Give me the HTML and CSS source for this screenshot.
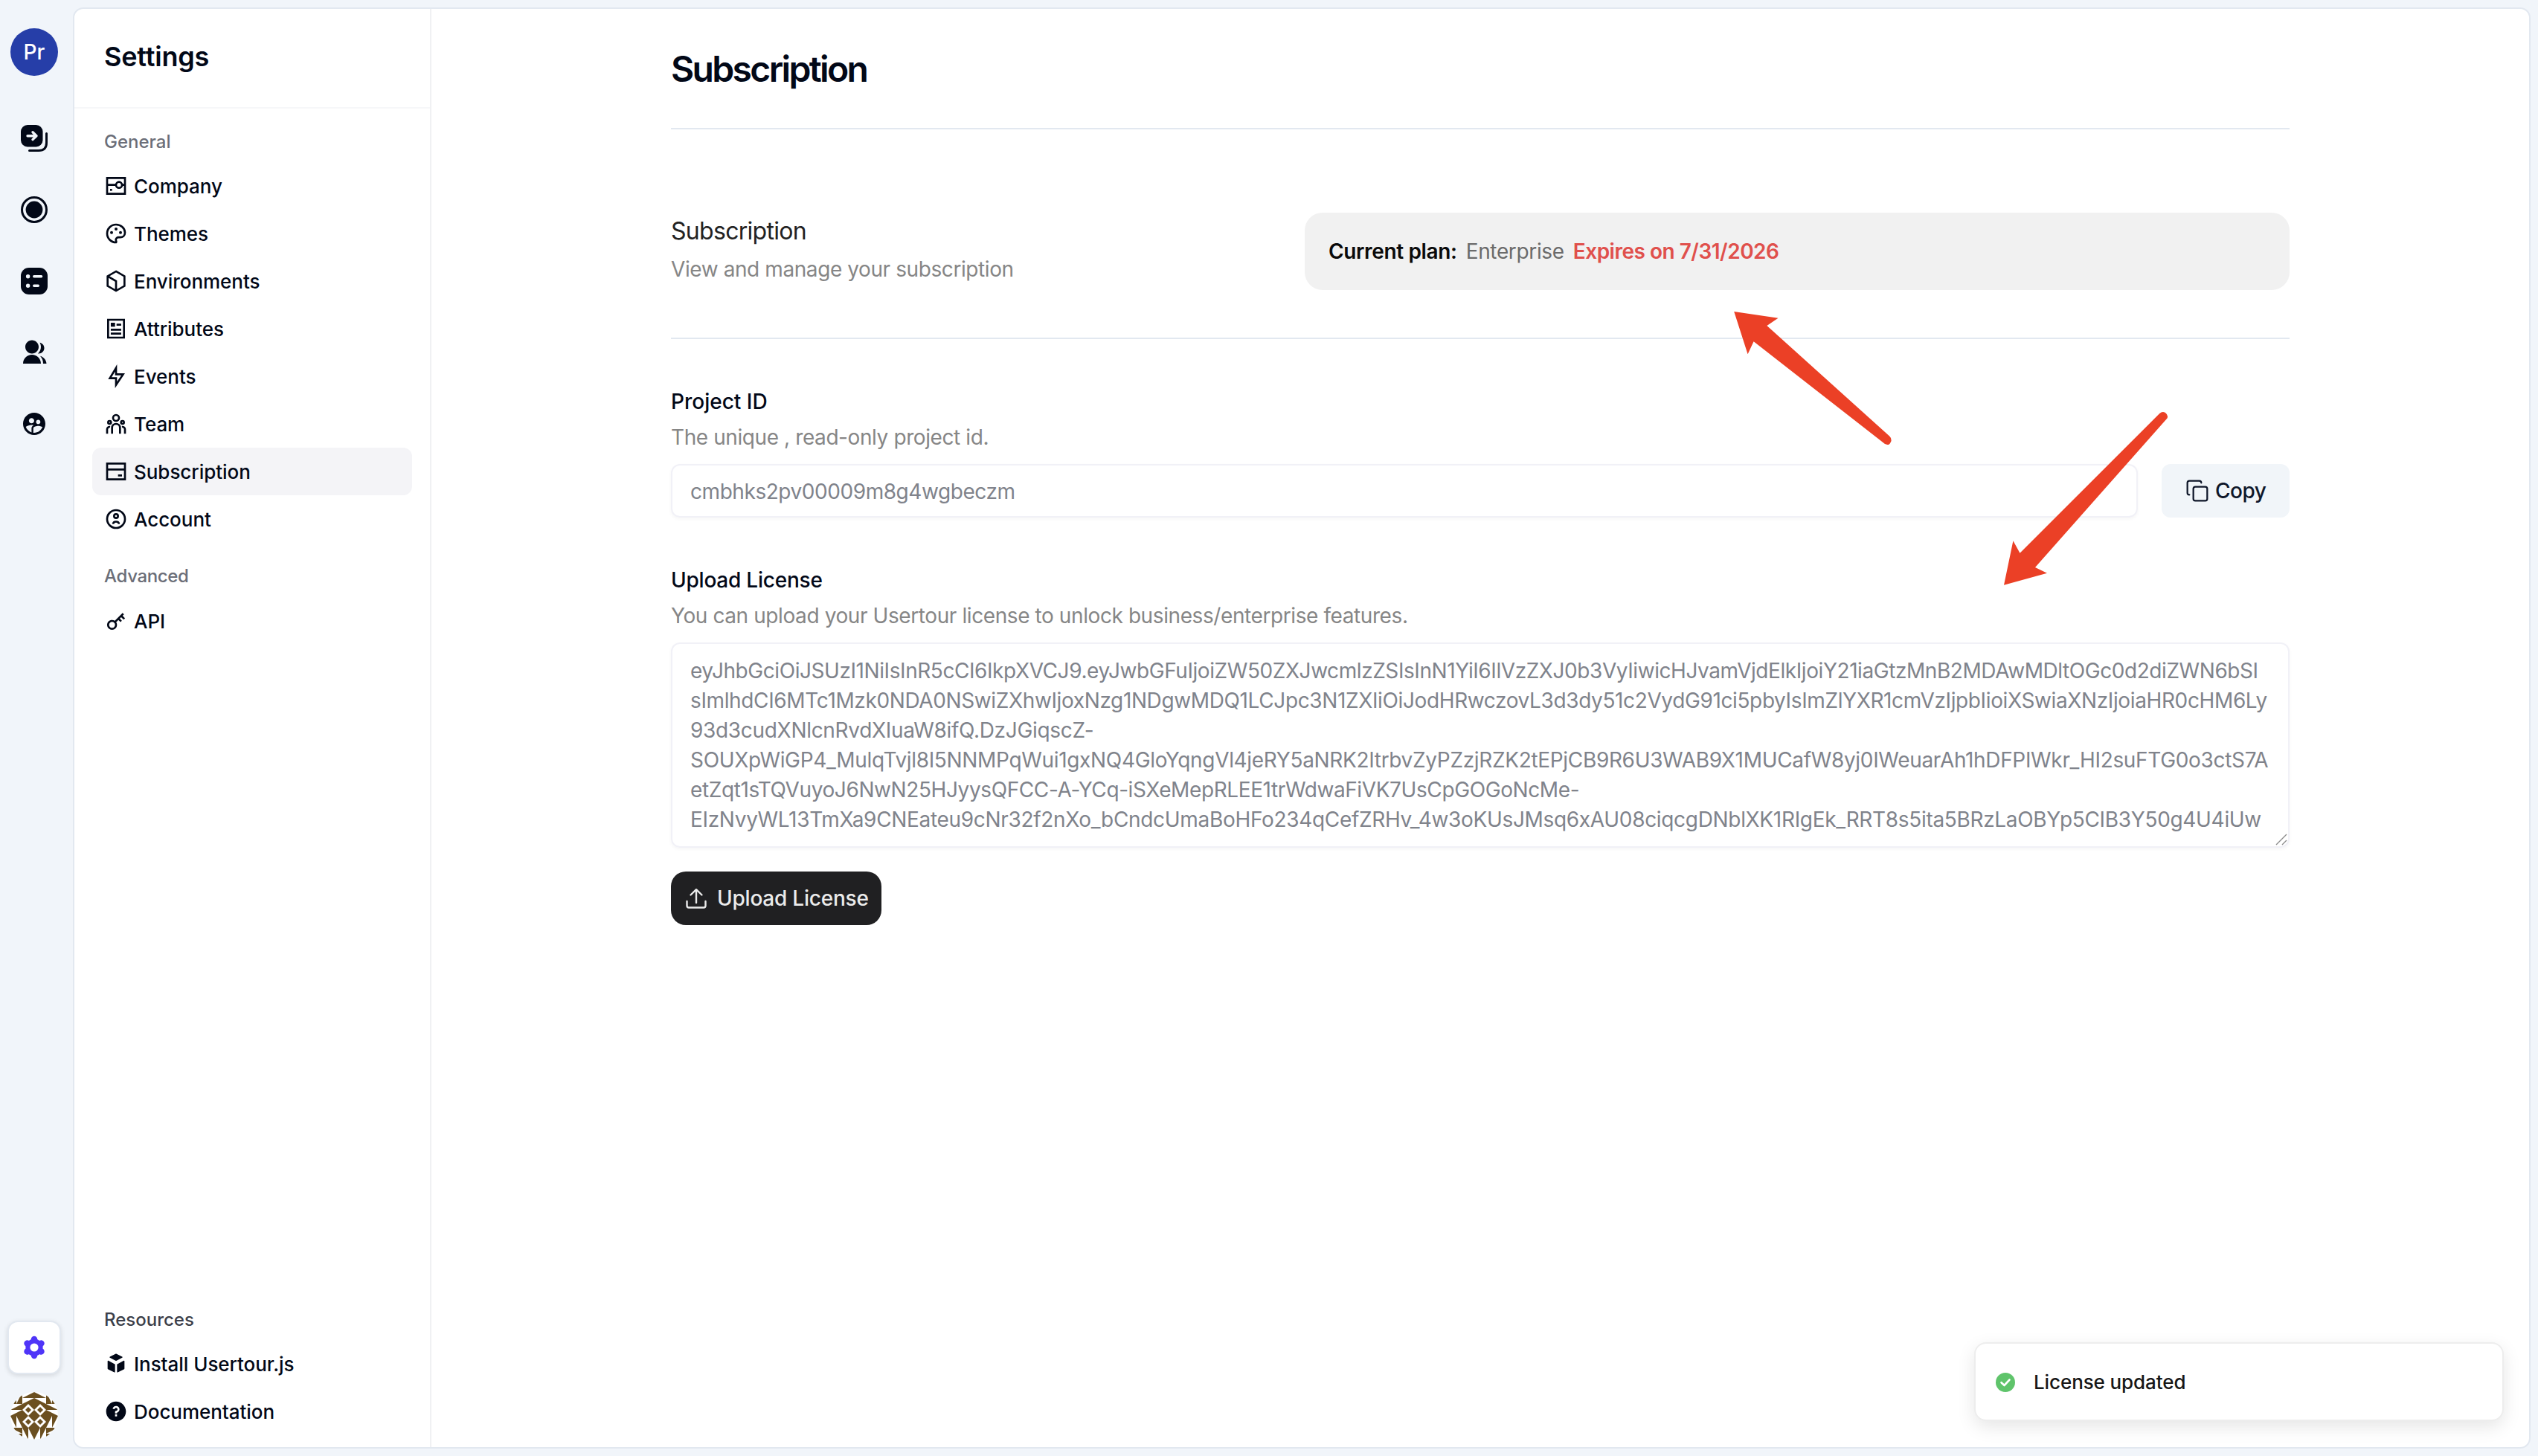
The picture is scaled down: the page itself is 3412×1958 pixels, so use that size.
FILE: index.html
```html
<!DOCTYPE html>
<html lang="en">
<head>
<meta charset="utf-8">
<title>Settings – Subscription</title>
<link rel="stylesheet" href="styles.css">
</head>
<body>
<div class="app">
  <nav class="rail">
    <div class="project-badge">Pr</div>
    <div class="rail-links">
      <a class="rail-link"><svg viewBox="0 0 36 36"><rect width="29.5" height="29.5" rx="9"/><path class="line" d="M34.5 11.5V24Q34.5 34.5 24 34.5H11.5"/><path class="cut" d="M9 14.7H20.5M16 9.8L21 14.7L16 19.6"/></svg></a>
      <a class="rail-link"><svg viewBox="0 0 36 36"><circle class="line" cx="18" cy="18" r="16.5"/><circle cx="18" cy="18" r="11.4"/></svg></a>
      <a class="rail-link"><svg viewBox="0 0 36 36"><rect width="36" height="36" rx="11"/><path class="cut" d="M17.7 11.7H27.6M17.7 24.3H23.3"/><circle class="hole" cx="9.6" cy="11.7" r="2.7"/><circle class="hole" cx="9.6" cy="24.3" r="2.7"/></svg></a>
      <a class="rail-link"><svg viewBox="0 0 24 24"><path d="M2 22C2 17.58 5.58 14 10 14C14.42 14 18 17.58 18 22H2ZM10 13C6.685 13 4 10.315 4 7C4 3.685 6.685 1 10 1C13.315 1 16 3.685 16 7C16 10.315 13.315 13 10 13ZM17.363 15.233C20.448 16.022 22.768 18.724 22.984 22H20C20 19.39 19 17.014 17.363 15.233ZM15.34 12.957C16.973 11.492 18 9.366 18 7C18 5.583 17.632 4.253 16.986 3.098C19.275 3.555 21 5.576 21 8C21 10.763 18.763 13 16 13C15.776 13 15.556 12.985 15.34 12.957Z"/></svg></a>
      <a class="rail-link"><svg viewBox="0 0 24 24"><path d="M11.99 2c-5.52 0-10 4.48-10 10s4.48 10 10 10 10-4.48 10-10-4.48-10-10-10zm3.61 6.34c1.07 0 1.93.86 1.93 1.93s-.86 1.93-1.93 1.93-1.93-.86-1.93-1.93c-.01-1.07.86-1.93 1.93-1.93zm-6-1.58c1.3 0 2.36 1.06 2.36 2.36s-1.06 2.36-2.36 2.36-2.36-1.06-2.36-2.36c0-1.31 1.05-2.36 2.36-2.36zm0 9.13v3.75c-2.4-.75-4.3-2.6-5.14-4.96 1.05-1.12 3.67-1.69 5.14-1.69.53 0 1.2.08 1.9.22-1.64.87-1.9 2.02-1.9 2.68zM11.99 20c-.27 0-.53-.01-.79-.04v-4.07c0-1.42 2.94-2.13 4.4-2.13 1.07 0 2.92.39 3.84 1.15-1.17 2.97-4.06 5.09-7.45 5.09z"/></svg></a>
    </div>
    <a class="rail-active"><svg viewBox="-16 -16 32 32"><circle r="11.6"/><path d="M0 -11V11M-9.53 -5.5L9.53 5.5M-9.53 5.5L9.53 -5.5"/><circle class="hub" r="5.6"/></svg></a>
    <svg class="avatar" viewBox="0 0 32 32">
      <defs>
        <g id="half">
          <path d="M8 0L4 8H8ZM4 0L0 8H4ZM16 0L8 4H16ZM16 4L8 8H16ZM8 8L0 12H8ZM8 12L0 16H8ZM0 16H4V24ZM4 16H8V24ZM0 24H8V28ZM0 28H8V32ZM8 24H12V32ZM12 24H16V32ZM8 8H16V24H8Z"/>
          <path fill="#fff" d="M12 8L16 12L12 16L8 12ZM12 16L16 20L12 24L8 20Z"/>
          <path d="M12 10L14 12L12 14L10 12ZM12 18L14 20L12 22L10 20Z"/>
        </g>
      </defs>
      <rect width="32" height="32" fill="#fff"/>
      <g fill="#6b4f20"><use href="#half"/><use href="#half" transform="matrix(-1 0 0 1 32 0)"/></g>
    </svg>
  </nav>

  <div class="panel">
    <aside class="sidebar">
      <h2 class="sidebar-title">Settings</h2>
      <div class="sidebar-body">
        <div class="group-label">General</div>
        <a class="item"><svg viewBox="0 0 24 24"><path d="M3 4H21V20H3ZM3 11H12M18 11H21"/><circle cx="15" cy="11" r="3"/><path class="solid" d="M6 15H8V17H6Z"/></svg>Company</a>
        <a class="item"><svg viewBox="0 0 24 24"><path d="M12 21C7 21 3 17 3 12C3 7 7 3 12 3C17 3 21 6.700 21 11C21 14 18.800 15.900 16.200 15.900H14.500C12.900 15.900 11.800 17 11.800 18.300C11.800 19.500 12.900 20 12 21Z"/><circle class="solid" cx="7.500" cy="11" r="1.500"/><circle class="solid" cx="12" cy="7.500" r="1.500"/><circle class="solid" cx="16.500" cy="11" r="1.500"/></svg>Themes</a>
        <a class="item"><svg viewBox="0 0 24 24"><path d="M12 2.200L20.500 7.100V16.900L12 21.800L3.500 16.900V7.100ZM3.500 7.100L12 12V21.800"/></svg>Environments</a>
        <a class="item"><svg viewBox="0 0 24 24"><path d="M4 3H20V21H4ZM12.500 8H17.200M6.700 13H17.200M6.700 17H17.200"/><path class="solid" d="M6.700 6H11V10H6.700Z"/></svg>Attributes</a>
        <a class="item"><svg viewBox="0 0 24 24"><path class="solid" d="M13 9H21L11 24V15H4L13 0V9ZM11 11V7.220L7.530 13H13V17.390L17.260 11H11Z"/></svg>Events</a>
        <a class="item"><svg viewBox="0 0 24 24"><circle cx="12" cy="6" r="3"/><circle cx="5.500" cy="10.500" r="1.500"/><circle cx="18.500" cy="10.500" r="1.500"/><path d="M8 22V16A4 4 0 0 1 16 16V22M3 22V17.500A2.500 2.500 0 0 1 6 15.050M21 22V17.500A2.500 2.500 0 0 0 18 15.050"/></svg>Team</a>
        <a class="item item-active"><svg viewBox="0 0 24 24"><path d="M3 4H21V20H3ZM3 10H21M14 16H18"/></svg>Subscription</a>
        <a class="item"><svg viewBox="0 0 24 24"><circle cx="12" cy="12" r="9"/><circle cx="12" cy="9" r="2"/><path d="M9 17C9.300 13.800 14.700 13.800 15 17"/></svg>Account</a>
        <div class="group-label group-advanced">Advanced</div>
        <a class="item"><svg viewBox="0 0 24 24"><path class="solid" d="M10.758 11.828L18.607 3.979L20.021 5.393L18.607 6.808L21.082 9.282L19.667 10.697L17.192 8.222L15.778 9.636L17.900 11.757L16.485 13.172L14.364 11.050L12.172 13.242C13.458 15.184 13.246 17.825 11.536 19.536C9.583 21.488 6.417 21.488 4.464 19.536C2.512 17.583 2.512 14.417 4.464 12.464C6.175 10.754 8.816 10.542 10.758 11.828ZM10.121 18.121C11.293 16.950 11.293 15.050 10.121 13.879C8.950 12.707 7.050 12.707 5.879 13.879C4.707 15.050 4.707 16.950 5.879 18.121C7.050 19.293 8.950 19.293 10.121 18.121Z"/></svg>API</a>
        <div class="resources">
          <div class="group-label label-dark">Resources</div>
          <a class="item"><svg viewBox="0 0 24 24"><path class="block" d="M12 2.400L18 5.400L12 8.500L6 5.400ZM4 9.300L10.500 12.800V20.200L4 16.900ZM20 9.300L13.500 12.800V20.200L20 16.900Z"/></svg>Install Usertour.js</a>
          <a class="item"><svg viewBox="0 0 24 24"><path class="solid" d="M12 22C6.477 22 2 17.523 2 12S6.477 2 12 2S22 6.477 22 12S17.523 22 12 22ZM11 15V17H13V15H11ZM13 13.355C14.446 12.925 15.500 11.586 15.500 10C15.500 8.067 13.933 6.500 12 6.500C10.302 6.500 8.886 7.709 8.567 9.313L10.529 9.706C10.666 9.018 11.272 8.500 12 8.500C12.828 8.500 13.500 9.172 13.500 10C13.500 10.828 12.828 11.500 12 11.500C11.448 11.500 11 11.948 11 12.500V14H13V13.355Z"/></svg>Documentation</a>
        </div>
      </div>
    </aside>

    <main class="main">
      <div class="content">
        <h1 class="page-title">Subscription</h1>
        <section class="plan-row">
          <div class="plan-intro">
            <h3 class="plan-heading">Subscription</h3>
            <p class="hint">View and manage your subscription</p>
          </div>
          <div class="plan-card"><span class="plan-label">Current plan:</span><span class="plan-name">Enterprise</span><span class="plan-expiry">Expires on 7/31/2026</span></div>
        </section>
        <section class="field">
          <h4 class="field-title">Project ID</h4>
          <p class="hint">The unique , read-only project id.</p>
          <div class="id-row">
            <div class="input">cmbhks2pv00009m8g4wgbeczm</div>
            <button class="btn-copy"><svg viewBox="0 0 24 24"><rect x="8" y="8" width="14" height="14" rx="2"/><path d="M4 16C2.900 16 2 15.100 2 14V4C2 2.900 2.900 2 4 2H14C15.100 2 16 2.900 16 4"/></svg>Copy</button>
          </div>
        </section>
        <section class="field field-license">
          <h4 class="field-title title-license">Upload License</h4>
          <p class="hint">You can upload your Usertour license to unlock business/enterprise features.</p>
          <div class="license-box">
            <div class="row-1">eyJhbGciOiJSUzI1NiIsInR5cCI6IkpXVCJ9.eyJwbGFuIjoiZW50ZXJwcmlzZSIsInN1YiI6IlVzZXJ0b3VyIiwicHJvamVjdElkIjoiY21iaGtzMnB2MDAwMDltOGc0d2diZWN6bSI</div>
            <div class="row-2">sImlhdCI6MTc1Mzk0NDA0NSwiZXhwIjoxNzg1NDgwMDQ1LCJpc3N1ZXIiOiJodHRwczovL3d3dy51c2VydG91ci5pbyIsImZlYXR1cmVzIjpbIioiXSwiaXNzIjoiaHR0cHM6Ly</div>
            <div class="row-3">93d3cudXNlcnRvdXIuaW8ifQ.DzJGiqscZ-</div>
            <div class="row-4">SOUXpWiGP4_MulqTvjl8I5NNMPqWui1gxNQ4GloYqngVl4jeRY5aNRK2ItrbvZyPZzjRZK2tEPjCB9R6U3WAB9X1MUCafW8yj0IWeuarAh1hDFPIWkr_HI2suFTG0o3ctS7A</div>
            <div class="row-5">etZqt1sTQVuyoJ6NwN25HJyysQFCC-A-YCq-iSXeMepRLEE1trWdwaFiVK7UsCpGOGoNcMe-</div>
            <div class="row-6">EIzNvyWL13TmXa9CNEateu9cNr32f2nXo_bCndcUmaBoHFo234qCefZRHv_4w3oKUsJMsq6xAU08ciqcgDNblXK1RIgEk_RRT8s5ita5BRzLaOBYp5CIB3Y50g4U4iUw</div>
            <svg class="grip" viewBox="0 0 16 16"><path d="M1 15L15 1M9 15L15 9"/></svg>
          </div>
          <button class="btn-upload"><svg viewBox="0 0 28 28"><path d="M14 20V2.500M6.500 9.500L14 2.200L21.500 9.500M1.500 18V24Q1.500 26.500 4 26.500H24Q26.500 26.500 26.500 24V18"/></svg>Upload License</button>
        </section>
      </div>
    </main>
  </div>

  <svg class="arrow arrow-plan" viewBox="2331 419 212 180"><path d="M2331.200 419L2390.500 427.800L2375.400 438L2539.600 586Q2543 589 2542.500 593Q2541 598 2537.300 598L2534 597L2357.600 459.300L2349.600 476.300Z"/></svg>
  <svg class="arrow arrow-license" viewBox="2694 553 222 234"><path d="M2694 786.800L2706.400 727.300L2715.500 743.700L2903.300 556Q2907 552.800 2911 555Q2915.500 558.500 2913.500 562.500L2736 763L2752 770.700Z"/></svg>
  <div class="toast"><svg viewBox="0 0 26 26"><circle cx="13" cy="13" r="13"/><path d="M7.500 13.200L11.500 17L18.500 9.500"/></svg>License updated</div>
</div>
</body>
</html>
```
FILE: styles.css
```css
* { box-sizing: border-box; margin: 0; }

body {
  font-family: Inter, "Liberation Sans", sans-serif;
  font-size: 28px;
  line-height: 40px;
  color: #020817;
  background: #f1f5f9;
}

.app {
  position: relative;
  display: flex;
  width: 3412px;
  height: 1958px;
  padding: 10px 10px 10px 0;
  background: #f1f5fa;
  overflow: hidden;
}

button { font: inherit; border: 0; }
svg { flex: none; display: block; }

/* Icon rail */
.rail {
  display: flex;
  flex-direction: column;
  align-items: center;
  width: 98px;
  padding: 28px 6px 12px 0;
}

.project-badge {
  width: 64px;
  height: 64px;
  border-radius: 50%;
  background: #263ea8;
  color: #fff;
  font-weight: 500;
  font-size: 28px;
  line-height: 64px;
  text-align: center;
}

.rail-links {
  flex: 1;
  display: flex;
  flex-direction: column;
  gap: 60px;
  padding-top: 66px;
}

.rail-link svg { width: 36px; height: 36px; fill: #020817; }
.rail-link .line { fill: none; stroke: #020817; stroke-width: 3; stroke-linecap: round; }
.rail-link .cut { fill: none; stroke: #f1f5fa; stroke-width: 3.4; stroke-linecap: round; stroke-linejoin: round; }
.rail-link .hole { fill: #f1f5fa; }

.rail-active {
  display: flex;
  align-items: center;
  justify-content: center;
  width: 72px;
  height: 72px;
  margin-bottom: 24px;
  border: 2px solid #e2e8f0;
  border-radius: 14px;
  background: #fff;
  box-shadow: 0 2px 6px rgba(0, 0, 0, .12);
}

.rail-active svg { width: 32px; height: 32px; fill: #4f35f8; }
.rail-active path { stroke: #4f35f8; stroke-width: 8.4; stroke-linecap: round; }
.rail-active .hub { fill: #fff; }

.avatar { width: 64px; height: 64px; border-radius: 50%; }

/* Panel */
.panel {
  flex: 1;
  display: flex;
  border: 2px solid #e2e8f0;
  border-radius: 14px;
  background: #fff;
  overflow: hidden;
}

.sidebar {
  display: flex;
  flex-direction: column;
  width: 480px;
  border-right: 2px solid #f0f1f3;
}

.sidebar-title {
  height: 134px;
  padding: 36px 40px 0;
  border-bottom: 2px solid #f6f7f9;
  font-size: 36px;
  font-weight: 600;
  line-height: 56px;
  letter-spacing: -.2px;
}

.sidebar-body {
  flex: 1;
  display: flex;
  flex-direction: column;
  padding: 28px 24px 16px;
}

.group-label {
  height: 44px;
  padding-left: 16px;
  font-size: 24px;
  font-weight: 500;
  line-height: 34px;
  color: #6b6e78;
}
.group-advanced { height: 45px; margin-top: 28px; letter-spacing: -.35px; }
.label-dark { color: #3c3f4a; }

.item {
  display: flex;
  align-items: center;
  gap: 8px;
  height: 64px;
  padding: 2px 0 0 16px;
  border-radius: 12px;
  font-size: 26px;
  font-weight: 500;
  letter-spacing: -.04px;
}
.item-active { background: #f4f4f7; }
.item svg { width: 32px; height: 32px; margin-bottom: 2px; fill: none; stroke: #020817; stroke-width: 2; }
.item .solid { fill: #020817; stroke: none; }
.item .block { fill: #020817; stroke-width: 1; stroke-linejoin: round; }

.resources { margin-top: auto; }

/* Main */
.main { flex: 1; display: flex; }
.content { width: 2176px; margin-left: 322px; }

.page-title {
  height: 162px;
  padding-top: 49px;
  border-bottom: 2px solid #e2e8f0;
  font-size: 48px;
  font-weight: 600;
  line-height: 64px;
  letter-spacing: -2.65px;
}

.plan-row {
  display: flex;
  justify-content: space-between;
  height: 282px;
  padding-top: 112px;
  border-bottom: 2px solid #e2e8f0;
}

.plan-heading {
  padding-top: 1px;
  font-size: 32px;
  font-weight: 400;
  line-height: 48px;
  letter-spacing: -.7px;
  color: #222;
}

.hint { line-height: 40px; letter-spacing: -.41px; color: #868686; }
.plan-intro .hint { margin-top: 7px; }

.plan-card {
  display: flex;
  align-items: center;
  gap: 12px;
  width: 1324px;
  height: 104px;
  padding: 0 32px;
  border-radius: 24px;
  background: #f1f1f1;
  letter-spacing: -.35px;
}
.plan-label { font-weight: 600; color: #0a0a0a; }
.plan-name { color: #6b6b6b; }
.plan-expiry { font-weight: 600; letter-spacing: -.5px; color: #e0504c; }

.field { padding-top: 64px; }
.field-title { font-size: 28px; font-weight: 500; line-height: 40px; }
.title-license { letter-spacing: -.23px; }
.field .hint { margin-top: 8px; }

.id-row { display: flex; gap: 32px; margin-top: 16px; }
.input {
  flex: 1;
  height: 72px;
  padding: 0 24px;
  border: 2px solid #f1f1f7;
  border-radius: 12px;
  box-shadow: 0 2px 4px rgba(0, 0, 0, .04);
  line-height: 70px;
  letter-spacing: -.44px;
  color: #80838b;
}

.btn-copy {
  display: flex;
  align-items: center;
  gap: 8px;
  width: 172px;
  height: 72px;
  padding: 0 32px;
  border-radius: 12px;
  background: #f1f5f9;
  color: #0f172a;
  font-weight: 500;
  letter-spacing: -.45px;
}
.btn-copy svg { width: 32px; height: 32px; fill: none; stroke: #0f172a; stroke-width: 1.7; stroke-linecap: round; }

.license-box {
  position: relative;
  height: 276px;
  margin-top: 16px;
  padding: 16px 24px;
  border: 2px solid #f1f1f7;
  border-radius: 12px;
  box-shadow: 0 2px 4px rgba(0, 0, 0, .04);
  white-space: nowrap;
  color: #80838b;
}
.row-1 { letter-spacing: -.43px; }
.row-2 { letter-spacing: -.375px; }
.row-3 { letter-spacing: -.31px; }
.row-4 { letter-spacing: -.33px; }
.row-5 { letter-spacing: -.4px; }
.row-6 { letter-spacing: -.32px; }
.grip {
  position: absolute;
  right: 1px;
  bottom: 1px;
  width: 16px;
  height: 16px;
  stroke: #8c8c8c;
  stroke-width: 1.4;
}

.btn-upload {
  display: flex;
  align-items: center;
  gap: 14px;
  width: 283px;
  height: 72px;
  margin-top: 32px;
  padding: 0 0 0 20px;
  border-radius: 20px;
  background: #202022;
  color: #ebebeb;
  font-weight: 500;
  letter-spacing: -.23px;
  white-space: nowrap;
}
.btn-upload svg { width: 28px; height: 28px; fill: none; stroke: #ebebeb; stroke-width: 2.4; stroke-linecap: round; stroke-linejoin: round; }

/* Overlays */
.arrow { position: absolute; fill: #eb4026; }
.arrow-plan { left: 2331px; top: 419px; width: 212px; height: 180px; }
.arrow-license { left: 2694px; top: 553px; width: 222px; height: 234px; }

.toast {
  position: absolute;
  left: 2654px;
  top: 1805px;
  display: flex;
  align-items: center;
  gap: 25px;
  width: 712px;
  height: 106px;
  padding: 2px 0 0 27px;
  border: 2px solid #ededed;
  border-radius: 16px;
  background: #fff;
  box-shadow: 0 8px 24px rgba(0, 0, 0, .1);
  font-size: 26px;
  font-weight: 500;
  letter-spacing: -.1px;
  color: #171717;
}
.toast svg { width: 26px; height: 26px; fill: #5fc46b; }
.toast path { fill: none; stroke: #fff; stroke-width: 2.6; stroke-linecap: round; stroke-linejoin: round; }
```
